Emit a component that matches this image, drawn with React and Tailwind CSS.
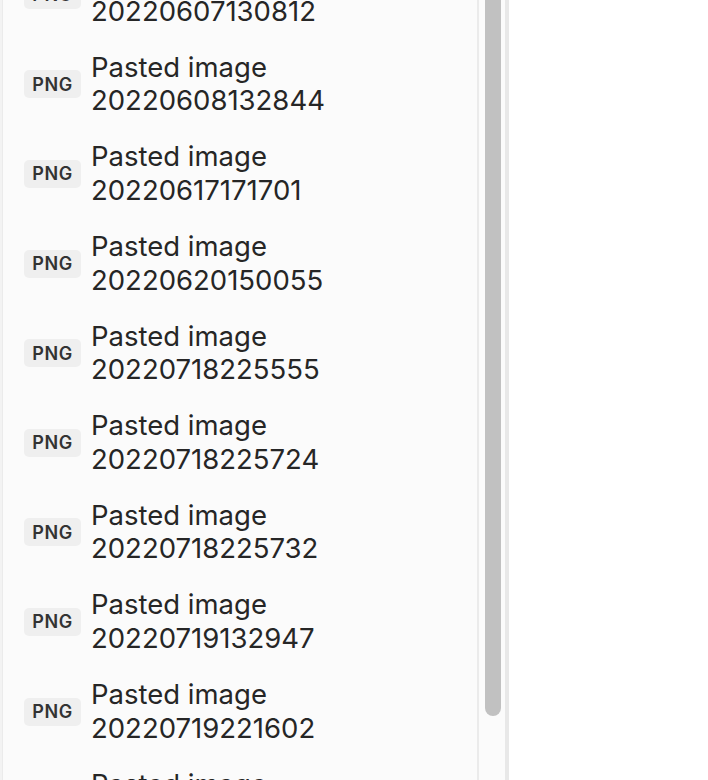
const items = [
  "20220607130812",
  "20220608132844",
  "20220617171701",
  "20220620150055",
  "20220718225555",
  "20220718225724",
  "20220718225732",
  "20220719132947",
  "20220719221602",
  "20220720101533",
];

function FileRow({ stamp }) {
  return (
    <div className="flex items-center h-[89.6px] pl-[21px]">
      <span className="flex items-center justify-center w-[57px] h-[28px] rounded-[5px] bg-[#efefef] text-[18px] font-semibold text-[#333] tracking-[0.5px]">
        PNG
      </span>
      <div className="ml-[10px] text-[27.5px] leading-[33.6px] text-[#262626]">
        <div>Pasted image</div>
        <div>{stamp}</div>
      </div>
    </div>
  );
}

export default function App() {
  return (
    <div className="flex h-[780px] w-[708px] overflow-hidden bg-white" style={{ fontFamily: "Inter, 'Noto Sans', sans-serif" }}>
      <div className="w-[3px] bg-[#f3f3f3] border-r border-[#ebebeb]" />
      <div className="w-[474px] bg-[#fbfbfb] overflow-hidden">
        <div className="mt-[-50px]">
          {items.map((s) => (
            <FileRow key={s} stamp={s} />
          ))}
        </div>
      </div>
      <div className="w-[2px] bg-[#ebebeb]" />
      <div className="w-[26px] bg-[#fbfbfb] pl-[6px]">
        <div className="w-[16px] h-[716px] bg-[#c1c1c1] rounded-b-[8px]" />
      </div>
      <div className="w-[4px] bg-[#e8e8e8]" />
      <div className="flex-1 bg-white" />
    </div>
  );
}
